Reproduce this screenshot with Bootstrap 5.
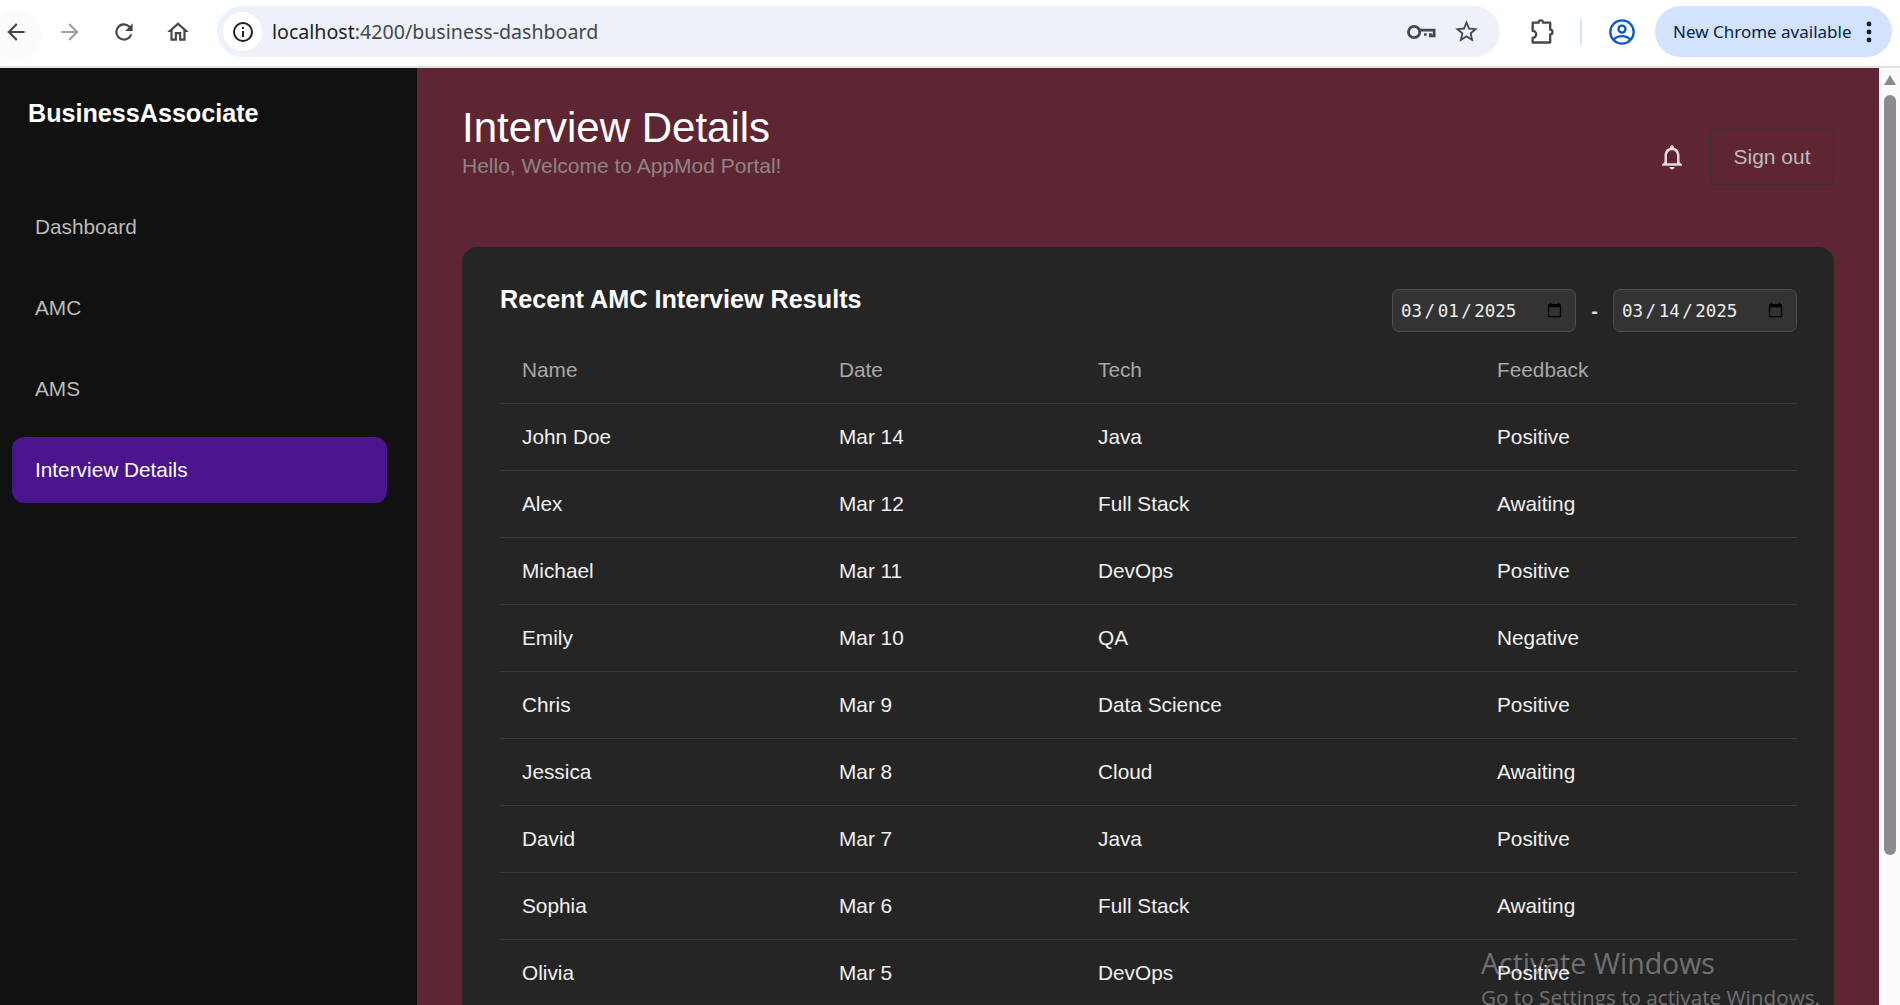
<!DOCTYPE html>
<html lang="en">
<head>
  <meta charset="UTF-8">
  <title>Interview Details</title>
  <meta name="viewport" content="width=device-width, initial-scale=1">
  <link href="https://cdn.jsdelivr.net/npm/bootstrap@5.3.0/dist/css/bootstrap.min.css" rel="stylesheet">
  <style>
    html, body { height: 100%; overflow: hidden; }
    body { font-family: "Liberation Sans", Arial, sans-serif; background: #fff; }

    .browser-bar { height: 68px; padding-right: 8px; padding-bottom: 3px; border-bottom: 2px solid #e3e3e3; gap: 22px; color: #474747; overflow: hidden; }
    .tool-btn { width: 32px; flex: none; position: relative; }
    .tool-btn svg { display: block; margin: auto; position: relative; }
    .tool-hover::before { content: ""; position: absolute; left: -9px; top: -9px; width: 50px; height: 50px; border-radius: 50%; background: #fbfbfb; }
    .tool-off { color: #a3a3a3; }
    .omnibox { height: 51px; margin-left: 1px; margin-right: -22px; padding: 0 20px 0 6px; background: #ecf1fa; border-radius: 26px; }
    .site-info { width: 39px; height: 39px; background: #fff; border-radius: 50%; }
    .url-text { margin-left: 10px; font: 19.6px "Noto Sans", sans-serif; color: #474747; white-space: nowrap; }
    .url-text b { font-weight: 400; color: #1f1f1f; }
    .omni-end { gap: 17px; }
    .bar-right { margin-left: 4px; gap: 0; }
    .bar-sep { width: 2px; height: 26px; background: #d3e3fd; margin: 0 26px 0 24px; }
    .update-chip { height: 51px; width: 237px; margin-left: 19px; padding-left: 18px; padding-right: 20px; background: #d3e3fd; border-radius: 26px; font: 17px "Noto Sans", sans-serif; color: #041e49; white-space: nowrap; }

    .app-row { height: calc(100vh - 68px); overflow: hidden; position: relative; }
    .side-panel { width: 417px; flex: none; background: #111; padding: 28px 30px 0 12px; }
    .brand-name { font-size: 25.2px; font-weight: 700; color: #fff; margin: 0 0 64px 16px; line-height: 34px; letter-spacing: -.03px; }
    .side-link { height: 66px; padding-left: 23px; margin-bottom: 15px; border-radius: 12px; color: #bbb; font-size: 20.8px; text-decoration: none; }
    .side-link.is-active { background: #4a148c; color: #fff; }

    .main-pane { flex: 1; background: #5e2632; padding: 36px 45px 0; overflow: hidden; }
    .page-title { font-size: 42px; font-weight: 400; line-height: 48px; color: #fff; margin: 0; }
    .page-sub { font-size: 21px; line-height: 28px; color: #8f8488; margin: 0; }
    .head-row { height: 143px; }
    .sign-out { width: 124px; height: 56px; border: 1px solid #3a2f31; border-radius: 7px; background: transparent; color: #bbb; font-size: 21px; padding: 0; }
    .bell-btn { margin-right: 23px; color: #e4dcdd; }
    .top-actions { margin-top: 25px; }

    .result-panel { background: #252525; border-radius: 15px; padding: 34px 37px 60px 38px; }
    .panel-head { height: 56px; }
    .panel-title { font-size: 25.2px; font-weight: 700; color: #fff; margin: 0; line-height: 36px; }
    .date-box { width: 184px; height: 43px; padding: 0 10px 0 8px; background: #333; border: 1px solid #4d4d4d; border-radius: 7px; color: #eee; font: 17.5px "DejaVu Sans Mono", monospace; }
    .date-box::-webkit-datetime-edit-text { padding: 0 2.5px; }
    .date-dash { width: 37px; text-align: center; color: #ddd; font-size: 20px; font-weight: 700; }

    .result-table { --bs-table-bg: transparent; --bs-table-color: #f0f0f0; margin: 0; table-layout: fixed; font-size: 20.8px; }
    .result-table th, .result-table td { height: 67px; padding: 0 0 0 22px; vertical-align: middle; border-bottom: 1px solid #383838; }
    .result-table th { height: 66px; font-weight: 400; color: #a8a8a8; }
    .result-table .col-name { width: 317px; }
    .result-table .col-date { width: 259px; }
    .result-table .col-tech { width: 399px; }

    .fake-scroll { width: 21px; flex: none; background: #fbfbfb; padding: 7px 4px 0 5px; }
    .fake-scroll .scroll-up { width: 0; height: 0; margin: 0 auto; border-left: 6px solid transparent; border-right: 6px solid transparent; border-bottom: 10px solid #8b8b8b; }
    .fake-scroll .scroll-thumb { width: 12px; height: 760px; margin-top: 10px; background: #8b8b8b; border-radius: 6px; }

    .win-mark { position: absolute; left: 1481px; top: 943px; color: rgba(255,255,255,.36); font-family: "Open Sans", "Noto Sans", sans-serif; white-space: nowrap; pointer-events: none; }
    .win-mark div:first-child { font-size: 28.5px; line-height: 40px; }
    .win-mark div:last-child { font-size: 20.7px; line-height: 28px; }
  </style>
</head>
<body>

<div class="browser-bar d-flex align-items-center">
  <div class="tool-btn tool-hover"><svg width="26" height="26" viewBox="0 0 24 24" fill="currentColor"><path d="M20 11H7.83l5.59-5.59L12 4 4 12l8 8 1.41-1.41L7.83 13H20v-2z"/></svg></div>
  <div class="tool-btn tool-off"><svg width="26" height="26" viewBox="0 0 24 24" fill="currentColor"><path d="M4 11h12.17l-5.59-5.59L12 4l8 8-8 8-1.41-1.41L16.17 13H4v-2z"/></svg></div>
  <div class="tool-btn"><svg width="26" height="26" viewBox="0 0 24 24" fill="currentColor"><path d="M17.65 6.35A8 8 0 1 0 19.73 14h-2.08A6 6 0 1 1 12 6c1.66 0 3.14.69 4.22 1.78L13 11h7V4l-2.35 2.35z"/></svg></div>
  <div class="tool-btn"><svg width="26" height="26" viewBox="0 0 24 24" fill="currentColor"><path d="M12 5.69l5 4.5V18h-2v-6H9v6H7v-7.81l5-4.5M12 3L2 12h3v8h6v-6h2v6h6v-8h3L12 3z"/></svg></div>

  <div class="omnibox flex-grow-1 d-flex align-items-center">
    <div class="site-info d-flex align-items-center justify-content-center flex-shrink-0">
      <svg width="24" height="24" viewBox="0 0 24 24" fill="#1f1f1f"><path d="M11 7h2v2h-2zm0 4h2v6h-2zm1-9a10 10 0 1 0 0 20 10 10 0 0 0 0-20zm0 18a8 8 0 1 1 0-16 8 8 0 0 1 0 16z"/></svg>
    </div>
    <div class="url-text"><b>localhost</b>:4200/business-dashboard</div>
    <div class="omni-end ms-auto d-flex align-items-center">
      <svg width="30" height="30" viewBox="0 0 24 24" fill="none" stroke="currentColor" stroke-width="2.200"><circle cx="6.500" cy="12" r="4.500"/><path d="M11 10.500h11.500v4.500h-3v-2M15.500 15v-2"/></svg>
      <svg width="27" height="27" viewBox="0 0 24 24" fill="currentColor"><path d="M22 9.240l-7.190-.620L12 2 9.190 8.630 2 9.240l5.460 4.730L5.820 21 12 17.270 18.180 21l-1.630-7.030L22 9.240zM12 15.400l-3.760 2.270 1-4.280-3.320-2.880 4.380-.380L12 6.100l1.710 4.040 4.380.380-3.320 2.880 1 4.280L12 15.400z"/></svg>
    </div>
  </div>

  <div class="bar-right d-flex align-items-center">
    <svg class="ms-4" width="28" height="28" viewBox="0 0 24 24" fill="none" stroke="currentColor" stroke-width="2" stroke-linejoin="round"><path d="M4 4h5a2 2 0 0 1 4 0h6v6a2 2 0 0 1 0 4v7H4v-4a3 3 0 0 0 0-6z"/></svg>
    <div class="bar-sep"></div>
    <svg width="28" height="28" viewBox="0 0 24 24" fill="none" stroke="#0b57d0" stroke-width="2"><circle cx="12" cy="12" r="10"/><circle cx="12" cy="9.500" r="3"/><path d="M5 18.500c2-2.500 4.500-3 7-3s5 .5 7 3"/></svg>
    <div class="update-chip d-flex align-items-center justify-content-between">
      <span>New Chrome available</span>
      <svg width="6" height="24" viewBox="0 0 6 24" fill="#041e49"><circle cx="3" cy="4" r="2.400"/><circle cx="3" cy="12" r="2.400"/><circle cx="3" cy="20" r="2.400"/></svg>
    </div>
  </div>
</div>

<div class="app-row d-flex">
  <nav class="side-panel">
    <div class="brand-name">BusinessAssociate</div>
    <a href="#" class="side-link d-flex align-items-center">Dashboard</a>
    <a href="#" class="side-link d-flex align-items-center">AMC</a>
    <a href="#" class="side-link d-flex align-items-center">AMS</a>
    <a href="#" class="side-link is-active d-flex align-items-center">Interview Details</a>
  </nav>

  <main class="main-pane">
    <div class="head-row d-flex justify-content-between">
      <div>
        <h1 class="page-title">Interview Details</h1>
        <p class="page-sub">Hello, Welcome to AppMod Portal!</p>
      </div>
      <div class="top-actions d-flex align-items-center align-self-start">
        <div class="bell-btn">
          <svg width="30" height="30" viewBox="0 0 24 24" fill="currentColor"><path d="M12 22c1.100 0 2-.9 2-2h-4c0 1.100.9 2 2 2zm6-6v-5c0-3.070-1.630-5.640-4.500-6.320V4c0-.83-.67-1.500-1.500-1.500s-1.500.67-1.500 1.500v.68C7.640 5.360 6 7.920 6 11v5l-2 2v1h16v-1l-2-2zm-2 1H8v-6c0-2.480 1.510-4.500 4-4.500s4 2.020 4 4.500v6z"/></svg>
        </div>
        <button class="sign-out" type="button">Sign out</button>
      </div>
    </div>

    <div class="result-panel">
      <div class="panel-head d-flex justify-content-between align-items-start">
        <h2 class="panel-title">Recent AMC Interview Results</h2>
        <div class="d-flex align-items-center mt-2">
          <input class="date-box" type="date" value="2025-03-01">
          <span class="date-dash">-</span>
          <input class="date-box" type="date" value="2025-03-14">
        </div>
      </div>
      <table class="table result-table">
        <thead>
          <tr><th class="col-name">Name</th><th class="col-date">Date</th><th class="col-tech">Tech</th><th>Feedback</th></tr>
        </thead>
        <tbody>
          <tr><td>John Doe</td><td>Mar 14</td><td>Java</td><td>Positive</td></tr>
          <tr><td>Alex</td><td>Mar 12</td><td>Full Stack</td><td>Awaiting</td></tr>
          <tr><td>Michael</td><td>Mar 11</td><td>DevOps</td><td>Positive</td></tr>
          <tr><td>Emily</td><td>Mar 10</td><td>QA</td><td>Negative</td></tr>
          <tr><td>Chris</td><td>Mar 9</td><td>Data Science</td><td>Positive</td></tr>
          <tr><td>Jessica</td><td>Mar 8</td><td>Cloud</td><td>Awaiting</td></tr>
          <tr><td>David</td><td>Mar 7</td><td>Java</td><td>Positive</td></tr>
          <tr><td>Sophia</td><td>Mar 6</td><td>Full Stack</td><td>Awaiting</td></tr>
          <tr><td>Olivia</td><td>Mar 5</td><td>DevOps</td><td>Positive</td></tr>
        </tbody>
      </table>
    </div>
  </main>

  <div class="fake-scroll">
    <div class="scroll-up"></div>
    <div class="scroll-thumb"></div>
  </div>
</div>

<div class="win-mark">
  <div>Activate Windows</div>
  <div>Go to Settings to activate Windows.</div>
</div>

</body>
</html>
